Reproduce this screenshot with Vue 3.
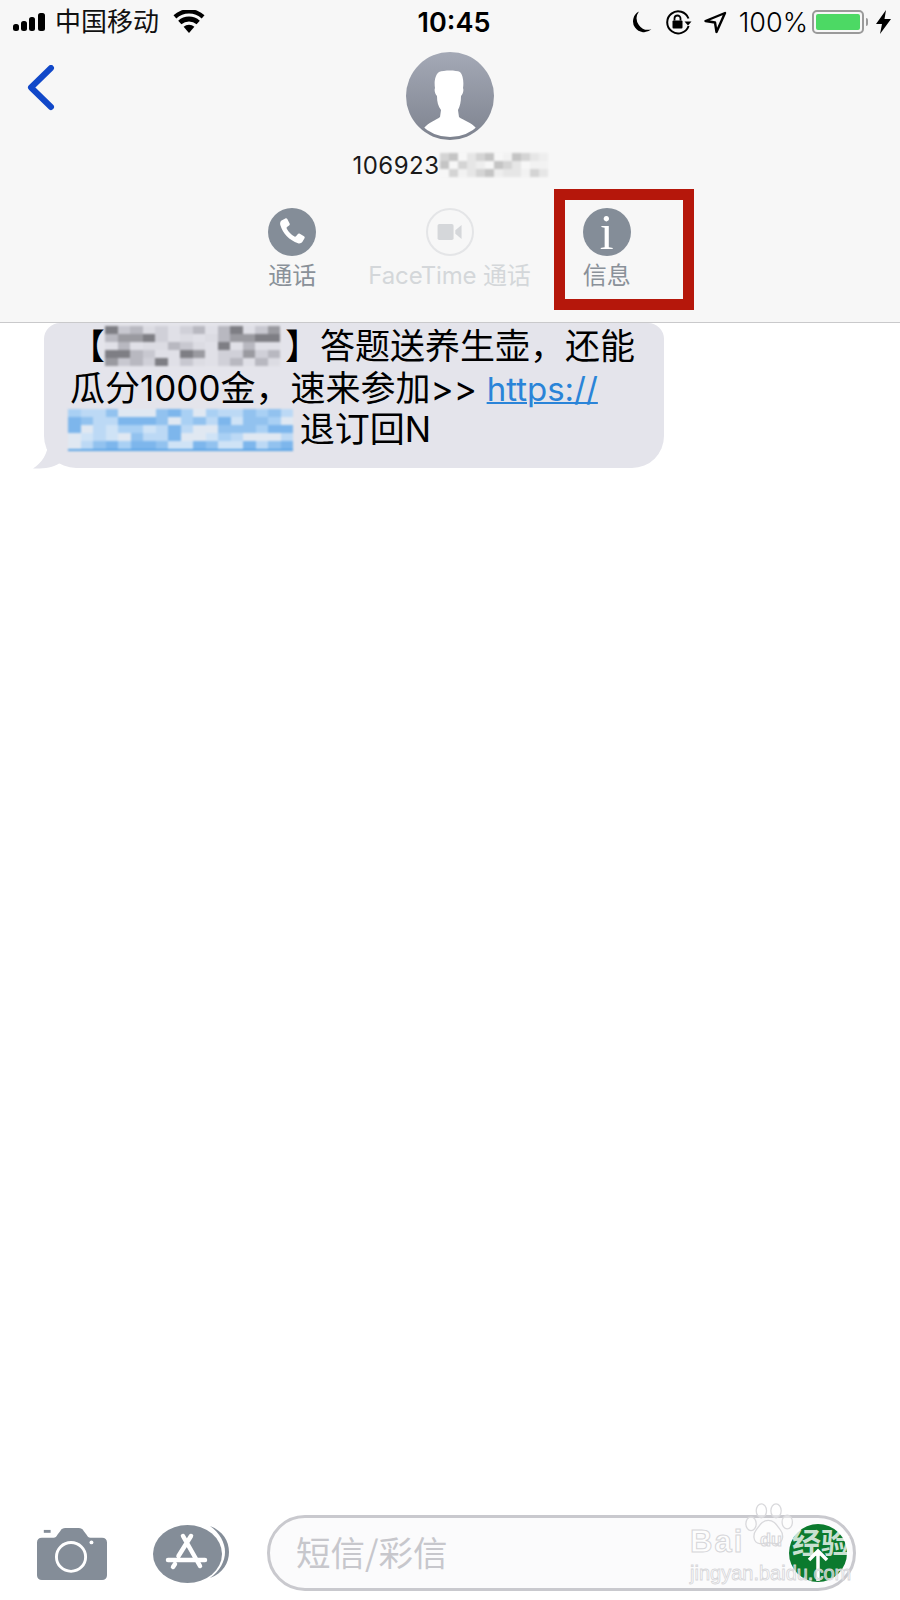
<template>
  <div class="page">
    <header class="top">
      <div class="status">
        <div class="status-left">
          <svg class="signal" width="36" height="20" viewBox="0 0 36 20">
            <rect x="0" y="12" width="6" height="7" rx="2.5" />
            <rect x="8" y="9" width="6" height="10" rx="2.5" />
            <rect x="16" y="5" width="6" height="14" rx="2.5" />
            <rect x="25" y="1" width="7" height="18" rx="2.5" />
          </svg>
          <span class="carrier">中国移动</span>
          <svg class="wifi" width="32" height="24" viewBox="0 0 32 24">
            <path d="M16 23l-5.400-6.200a8 8 0 0 1 10.800 0z" />
            <path d="M8.400 14.300l-3.200-3.600a16 16 0 0 1 21.600 0l-3.200 3.600a11.400 11.400 0 0 0-15.200 0z" />
            <path d="M3.300 8.400L.5 5.200a23 23 0 0 1 31 0l-2.800 3.200a19 19 0 0 0-25.400 0z" />
          </svg>
        </div>
        <span class="clock">10:45</span>
        <div class="status-right">
          <svg width="24" height="25" viewBox="0 0 22 24">
            <path d="M9 1.500a11 11 0 0 0 12 17A10.500 10.500 0 1 1 9 1.500z" fill="#000" />
          </svg>
          <svg class="lock" width="27" height="26" viewBox="0 0 27 26">
            <path d="M23.500 9.500A11 11 0 1 0 23.600 17" fill="none" stroke="#000" stroke-width="2" />
            <path d="M19.500 12.500h7l-3.500 4z" fill="#000" />
            <rect x="7.500" y="11.500" width="10" height="8" rx="1" fill="#000" />
            <path d="M9.500 11.500V9.500a3 3 0 0 1 6 0v2" fill="none" stroke="#000" stroke-width="1.800" />
          </svg>
          <svg class="arrow" width="23" height="23" viewBox="0 0 23 23">
            <path d="M21 2L12.500 21l-1.500-9.500L1.500 10z" fill="none" stroke="#000" stroke-width="2.400" stroke-linejoin="round" />
          </svg>
          <span class="percent">100%</span>
          <div class="battery"><div class="battery-fill"></div></div>
          <span class="battery-tip"></span>
          <svg width="15" height="24" viewBox="0 0 15 24">
            <path d="M10 0L0 14h6l-2 10L15 9H8.500z" fill="#000" />
          </svg>
        </div>
      </div>

      <div class="nav">
        <div class="back">
          <svg width="30" height="50" viewBox="0 0 30 50">
            <path d="M25 3L5 22.500 25 42" fill="none" stroke="#1148c9" stroke-width="6" stroke-linecap="round" stroke-linejoin="round" />
          </svg>
        </div>
        <div class="contact">
          <svg class="avatar" width="88" height="88" viewBox="0 0 88 88">
            <defs>
              <linearGradient id="avatarGrad" x1="0" y1="0" x2="0" y2="1">
                <stop offset="0" stop-color="#a4a9b6" />
                <stop offset="1" stop-color="#7e838f" />
              </linearGradient>
              <clipPath id="avatarClip"><circle cx="44" cy="44" r="41" /></clipPath>
            </defs>
            <circle cx="44" cy="44" r="44" fill="url(#avatarGrad)" />
            <path clip-path="url(#avatarClip)" fill="#fff" d="M33 20C38 18 50 18 54 20 57 23 58 30 57 36 58 38 57 42 55 44 55 50 54 54 52 58L53 65C57 68 66 71 70 76L70 90 18 90 18 76C22 71 30 68 34 65L35 58C32 54 31 50 31 44 29 42 28 38 29 36 28 30 29 23 33 20z" />
          </svg>
          <div class="number">
            <span>106923</span>
            <div class="mosaic mosaic-num">
              <i v-for="(c, i) in numCells" :key="i" :style="{ background: c }"></i>
            </div>
          </div>
        </div>
        <div></div>
      </div>

      <div class="actions">
        <div class="action">
          <div class="circle">
            <svg width="30" height="30" viewBox="0 0 30 30">
              <path fill="#fff" d="M4.500 3.500l3.800-2c.8-.4 1.600-.2 2 .6l2.300 4.400c.4.800.2 1.500-.5 2L10 10c-.5.400-.6.900-.3 1.500 1.800 3.500 4.300 6.100 7.800 8 .6.300 1.100.2 1.500-.3l1.700-2c.6-.7 1.300-.8 2.100-.4l4.200 2.500c.8.500.9 1.300.5 2l-2.200 3.700c-.8 1.200-2.600 1.800-4.300 1.300C12.500 23.300 5.700 16.300 3.300 8c-.5-1.800 0-3.600 1.200-4.500z" />
            </svg>
          </div>
          <span>通话</span>
        </div>
        <div class="action disabled">
          <div class="circle">
            <svg width="26" height="16" viewBox="0 0 28 18">
              <rect x="0" y="0" width="18" height="18" rx="2" fill="#d5d7da" />
              <path d="M27 1v16l-7-6V7z" fill="#d5d7da" />
            </svg>
          </div>
          <span>FaceTime 通话</span>
        </div>
        <div class="action">
          <div class="circle">
            <span class="info">i</span>
          </div>
          <span>信息</span>
        </div>
      </div>
    </header>

    <main class="thread">
      <div class="bubble">
        <svg class="tail" width="32" height="26" viewBox="0 0 32 26">
          <path d="M16 0c0 10-6 20-15 25.500C10 26 20 25 28 20z" fill="#e4e4eb" />
        </svg>
        <p class="line">【<span class="mosaic mosaic-name"><i v-for="(c, i) in nameCells" :key="i" :style="{ background: c }"></i></span>】答题送养生壶，还能</p>
        <p class="line">瓜分1000金，速来参加>> <a class="link">https://</a></p>
        <p class="line"><span class="mosaic mosaic-link"><i v-for="(c, i) in linkCells" :key="i" :style="{ background: c }"></i></span> 退订回N</p>
      </div>
    </main>

    <footer class="bottom">
      <svg class="camera" width="70" height="52" viewBox="0 0 72 54" preserveAspectRatio="none">
        <rect x="7" y="2" width="7" height="3" fill="#848d98" />
        <path fill="#848d98" d="M5 10h12c2 0 3-1 4-3l3-4c1-2 3-3 5-3h14c2 0 4 1 5 3l3 4c1 2 2 3 4 3h12c3 0 5 2 5 5v34c0 3-2 5-5 5H5c-3 0-5-2-5-5V15c0-3 2-5 5-5z" />
        <circle cx="35" cy="30" r="15" fill="none" stroke="#fff" stroke-width="3" />
        <circle cx="56" cy="15" r="2" fill="#fff" />
      </svg>
      <svg class="apps" width="78" height="60" viewBox="0 0 78 60">
        <path d="M57 3C70 8 76 18 76 29S70 50 57 55C67 48 72 38 72 29S67 10 57 3z" fill="#848d98" />
        <ellipse cx="34.500" cy="31" rx="34.500" ry="29" fill="#848d98" />
        <path d="M38 13L25.500 33M30 13l17 30M15 37h37M22 41l-2 3" fill="none" stroke="#fff" stroke-width="4.500" stroke-linecap="round" />
      </svg>
      <div class="input">
        <span class="placeholder">短信/彩信</span>
        <div class="send">
          <svg width="24" height="34" viewBox="0 0 24 34">
            <path d="M12 33V3M3 12l9-9 9 9" fill="none" stroke="#fff" stroke-width="3.500" />
          </svg>
        </div>
      </div>

      <div class="watermark">
        <span class="wm-bai">Bai</span>
        <svg class="wm-paw" width="50" height="45" viewBox="0 0 58 52">
          <g fill="rgba(255,255,255,.45)" stroke="#d9d9dc" stroke-width="1.500">
            <ellipse cx="7" cy="24" rx="6" ry="8" />
            <ellipse cx="19" cy="9" rx="6" ry="8" />
            <ellipse cx="36" cy="9" rx="6" ry="8" />
            <ellipse cx="49" cy="22" rx="6" ry="8" />
            <path d="M27 20c7 0 10 6 14 11 4 5 4 15-4 16-4 .5-7-1-10-1s-6 1.500-10 1c-8-1-8-11-4-16 4-5 7-11 14-11z" />
          </g>
        </svg>
        <span class="wm-du">du</span>
        <span class="wm-jy">经验</span>
        <span class="wm-url">jingyan.baidu.com</span>
      </div>
    </footer>

    <div class="highlight"></div>
  </div>
</template>

<script setup>
// pseudo random pixel mosaic for the blurred out parts of the screenshot
function mosaic(count, colors, seed) {
  const cells = []
  let n = seed
  for (let i = 0; i < count; i++) {
    n = (n * 9301 + 49297) % 233280
    cells.push(colors[Math.floor((n / 233280) * colors.length)])
  }
  return cells
}

const numCells = mosaic(36, ['#f7f7f7', '#e6e6e6', '#d4d4d4', '#c4c4c4', '#eeeeee', '#f2f2f2'], 7)
const nameCells = mosaic(70, ['#dcdce3', '#d0d0d8', '#b8b8c0', '#9a9aa0', '#7e7e84', '#e0e0e7', '#c8c8d0'], 11)
const linkCells = mosaic(90, ['#a9d0f4', '#cfe3f6', '#7db6ec', '#e0e8f2', '#92c2ef', '#bcd9f5'], 23)
</script>

<style>
body {
  background: #fff;
}
</style>

<style scoped>
.page {
  position: relative;
  width: 900px;
  height: 1600px;
  display: flex;
  flex-direction: column;
  background: #fff;
  overflow: hidden;
  font-family: Inter, "Noto Sans CJK SC", sans-serif;
  color: #000;
}

.top {
  height: 323px;
  box-sizing: border-box;
  background: #f7f7f7;
  border-bottom: 1px solid #c9c9cb;
  flex-shrink: 0;
}

.status {
  display: grid;
  grid-template-columns: 1fr auto 1fr;
  align-items: center;
  height: 44px;
  padding: 0 9px 0 13px;
}

.status-left {
  display: flex;
  align-items: center;
}

.carrier {
  margin-left: 6px;
  font-size: 26px;
  line-height: 44px;
  color: #111;
}

.wifi {
  margin-left: 14px;
}

.clock {
  font-size: 27px;
  font-weight: 600;
  margin-left: 4px;
}

.status-right {
  display: flex;
  align-items: center;
  justify-content: flex-end;
}

.lock {
  margin-left: 12px;
}

.arrow {
  margin-left: 12px;
}

.percent {
  margin-left: 12px;
  font-size: 27px;
  font-weight: 300;
}

.battery {
  margin-left: 4px;
  width: 52px;
  height: 24px;
  box-sizing: border-box;
  border: 2px solid #9a9a9a;
  border-radius: 5px;
  padding: 2px;
}

.battery-fill {
  height: 100%;
  border-radius: 2px;
  background: #4cd964;
}

.battery-tip {
  width: 2px;
  height: 8px;
  margin-left: 2px;
  background: #9a9a9a;
  border-radius: 0 2px 2px 0;
}

.status-right svg:last-child {
  margin-left: 8px;
}

.nav {
  display: grid;
  grid-template-columns: 1fr auto 1fr;
  height: 164px;
  padding-top: 8px;
  box-sizing: border-box;
}

.back {
  padding: 13px 0 0 26px;
}

.contact {
  display: flex;
  flex-direction: column;
  align-items: center;
}

.avatar {
  display: block;
}

.number {
  display: flex;
  align-items: center;
  height: 30px;
  margin-top: 10px;
  font-size: 24px;
  letter-spacing: 0.5px;
  color: #1a1a1a;
}

.mosaic {
  display: inline-grid;
  filter: blur(1.2px);
}

.mosaic i {
  display: block;
}

.mosaic-num {
  grid-template-columns: repeat(12, 9px);
  grid-auto-rows: 8px;
  width: 108px;
}

.mosaic-name {
  grid-template-columns: repeat(14, 12.500px);
  grid-auto-rows: 8px;
  vertical-align: top;
  margin-right: 5px;
}

.mosaic-link {
  grid-template-columns: repeat(18, 12.500px);
  grid-auto-rows: 8px;
  vertical-align: top;
  border-bottom: 2px solid #5aa4e6;
  margin-left: -2px;
  margin-right: -3px;
}

.actions {
  display: flex;
  justify-content: center;
  gap: 52px;
  padding-right: 1px;
}

.action {
  display: flex;
  flex-direction: column;
  align-items: center;
  font-size: 24px;
  color: #8a9199;
}

.action .circle {
  width: 48px;
  height: 48px;
  border-radius: 50%;
  background: #848d98;
  display: flex;
  align-items: center;
  justify-content: center;
}

.action span {
  line-height: 40px;
}

.action.disabled {
  color: #d4d7da;
  letter-spacing: -0.15px;
}

.action.disabled .circle {
  box-sizing: border-box;
  background: transparent;
  border: 2px solid #e4e5e7;
}

.circle .info {
  font-family: "Liberation Serif", serif;
  font-size: 50px;
  line-height: 48px;
  color: #fff;
}

.thread {
  flex: 1;
  padding-left: 44px;
}

.bubble {
  position: relative;
  width: 620px;
  height: 145px;
  box-sizing: border-box;
  padding: 3px 0 0 26px;
  background: #e4e4eb;
  border-radius: 16px 16px 32px 32px;
  font-family: Inter, "Noto Sans CJK SC", sans-serif;
  font-size: 35px;
}

.tail {
  position: absolute;
  left: -12px;
  bottom: -1px;
}

.line {
  margin: 0;
  height: 41.500px;
  line-height: 41.500px;
  white-space: nowrap;
}

.link {
  color: #2a84d8;
  text-decoration: underline;
  text-decoration-thickness: 2px;
  font-size: 33px;
}

.bottom {
  position: relative;
  flex-shrink: 0;
  display: flex;
  align-items: center;
  height: 110px;
  padding: 12px 44px 0 37px;
  box-sizing: border-box;
}

.camera {
  margin-top: 6px;
}

.apps {
  margin-left: 46px;
  margin-top: 4px;
}

.input {
  margin-left: 36px;
  flex: 1;
  height: 76px;
  box-sizing: border-box;
  border: 3px solid #c9c9ce;
  border-radius: 38px;
  background: #fbfbfc;
  display: flex;
  align-items: center;
  justify-content: space-between;
  padding: 0 6px 0 26px;
  margin-top: 4px;
}

.placeholder {
  font-size: 34.500px;
  color: #c7c7cc;
  font-family: "Noto Sans CJK SC", sans-serif;
  margin-top: -5px;
}

.send {
  width: 58px;
  height: 58px;
  border-radius: 50%;
  background: #0b7a2e;
  display: flex;
  align-items: flex-end;
  justify-content: center;
}

.watermark {
  position: absolute;
  left: 688px;
  top: 0;
  width: 170px;
  height: 110px;
}

.wm-bai,
.wm-du {
  position: absolute;
  font-family: "Liberation Sans", sans-serif;
  font-weight: 700;
  color: rgba(255, 255, 255, 0.55);
  -webkit-text-stroke: 1px #d6d6d9;
}

.wm-bai {
  left: 2px;
  top: 34px;
  font-size: 31px;
  letter-spacing: 2px;
}

.wm-paw {
  position: absolute;
  left: 57px;
  top: 13px;
}

.wm-du {
  left: 72px;
  top: 40px;
  font-size: 18px;
  color: transparent;
}

.wm-jy {
  position: absolute;
  left: 104px;
  top: 30px;
  font-family: "Noto Sans CJK SC", sans-serif;
  font-size: 29px;
  font-weight: 700;
  color: rgba(255, 255, 255, 0.8);
  white-space: nowrap;
}

.wm-url {
  position: absolute;
  left: 2px;
  top: 72px;
  font-family: "Liberation Sans", sans-serif;
  font-size: 20px;
  color: rgba(255, 255, 255, 0.6);
  -webkit-text-stroke: 0.8px #d6d6d9;
  white-space: nowrap;
}

.highlight {
  position: absolute;
  left: 554px;
  top: 189px;
  width: 140px;
  height: 121px;
  box-sizing: border-box;
  border: 11px solid #b5170b;
}
</style>
